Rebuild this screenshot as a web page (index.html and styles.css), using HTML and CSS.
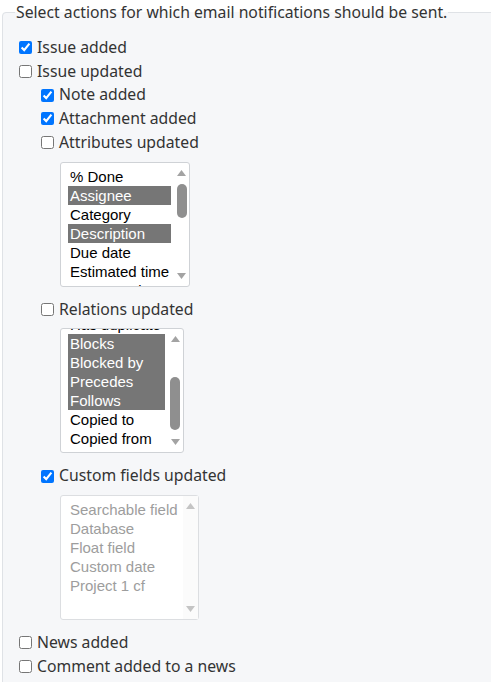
FILE: index.html
```html
<!DOCTYPE html>
<html>
<head>
<meta charset="utf-8">
<link rel="stylesheet" href="styles.css">
</head>
<body>
<fieldset class="box">
  <legend class="box-title">Select actions for which email notifications should be sent.</legend>
  <label class="row"><input type="checkbox" checked>Issue added</label>
  <label class="row"><input type="checkbox">Issue updated</label>
  <label class="row sub"><input type="checkbox" checked>Note added</label>
  <label class="row sub"><input type="checkbox" checked>Attachment added</label>
  <label class="row sub"><input type="checkbox">Attributes updated</label>
  <div class="list">
    <div class="list-view">
      <div class="opt">% Done</div>
      <div class="opt sel">Assignee</div>
      <div class="opt">Category</div>
      <div class="opt sel">Description</div>
      <div class="opt">Due date</div>
      <div class="opt">Estimated time</div>
      <div class="opt">Parent task</div>
      <div class="opt">Priority</div>
      <div class="opt">Private</div>
    </div>
    <div class="scrollbar">
      <svg class="arrow" viewBox="0 0 9 6" width="9" height="6"><path d="M4.5 0 L9 6 L0 6 Z"/></svg>
      <div class="track"><div class="thumb" style="margin-top:8px;height:34px"></div></div>
      <svg class="arrow" viewBox="0 0 9 6" width="9" height="6"><path d="M0 0 L9 0 L4.5 6 Z"/></svg>
    </div>
  </div>
  <label class="row sub"><input type="checkbox">Relations updated</label>
  <div class="list">
    <div class="list-view" id="relations">
      <div class="opt">Related to</div>
      <div class="opt">Is duplicate of</div>
      <div class="opt">Has duplicate</div>
      <div class="opt sel">Blocks</div>
      <div class="opt sel">Blocked by</div>
      <div class="opt sel">Precedes</div>
      <div class="opt sel">Follows</div>
      <div class="opt">Copied to</div>
      <div class="opt">Copied from</div>
    </div>
    <div class="scrollbar">
      <svg class="arrow" viewBox="0 0 9 6" width="9" height="6"><path d="M4.5 0 L9 6 L0 6 Z"/></svg>
      <div class="track"><div class="thumb" style="margin-top:35px;height:53px"></div></div>
      <svg class="arrow" viewBox="0 0 9 6" width="9" height="6"><path d="M0 0 L9 0 L4.5 6 Z"/></svg>
    </div>
  </div>
  <label class="row sub"><input type="checkbox" checked>Custom fields updated</label>
  <div class="list disabled">
    <div class="list-view">
      <div class="opt">Searchable field</div>
      <div class="opt">Database</div>
      <div class="opt">Float field</div>
      <div class="opt">Custom date</div>
      <div class="opt">Project 1 cf</div>
    </div>
    <div class="scrollbar">
      <svg class="arrow" viewBox="0 0 9 6" width="9" height="6"><path d="M4.5 0 L9 6 L0 6 Z"/></svg>
      <div class="track"></div>
      <svg class="arrow" viewBox="0 0 9 6" width="9" height="6"><path d="M0 0 L9 0 L4.5 6 Z"/></svg>
    </div>
  </div>
  <label class="row"><input type="checkbox">News added</label>
  <label class="row"><input type="checkbox">Comment added to a news</label>
</fieldset>
<script src="app.js"></script>
</body>
</html>
```
FILE: styles.css
```css
html, body {
  margin: 0;
  padding: 0;
  overflow: hidden;
  background: #ffffff;
}
body {
  font-family: "Noto Sans", "Open Sans", sans-serif;
  font-size: 15.75px;
  line-height: 23.75px;
  color: #333333;
}
.box {
  box-sizing: border-box;
  width: 620px;
  height: 720px;
  margin: 1px 0 0 2px;
  padding: 11px 12px 0 12px;
  border: 1px solid #dfe2e6;
  border-radius: 4px;
  background: #f6f7f9;
}
.box-title {
  padding: 0 1px;
}
.row {
  display: flex;
  align-items: center;
  height: 23.75px;
}
.row input {
  margin: 3px 5px 3px 4px;
  width: 13px;
  height: 13px;
}
.row.sub {
  margin-left: 22px;
}
.list {
  display: flex;
  width: fit-content;
  box-sizing: border-box;
  height: 125px;
  margin: 7px 0 11px 45px;
  border: 1px solid #cfd2d6;
  border-radius: 3px;
  background: #ffffff;
  color: #000000;
  font-family: "Liberation Sans", Arial, sans-serif;
  font-size: 15px;
  line-height: 19px;
}
.list-view {
  overflow: hidden;
  padding: 4px 3px 4px 7px;
}
.opt {
  height: 19px;
  padding: 0 2px;
  white-space: nowrap;
}
.opt.sel {
  background: #767676;
  color: #ffffff;
}
.scrollbar {
  width: 15px;
  display: flex;
  flex-direction: column;
  align-items: center;
  padding: 7px 0;
}
.arrow {
  display: block;
  fill: #a3a3a3;
  flex: none;
}
.track {
  flex: 1;
  display: flex;
  flex-direction: column;
  align-items: center;
}
.thumb {
  width: 10px;
  border-radius: 5px;
  background: #8f8f8f;
}
.list.disabled {
  color: #9d9d9d;
  border-color: #dcdee1;
}
.list.disabled .scrollbar {
  background: #fbfbfb;
}
.list.disabled .arrow {
  fill: #c4c4c4;
}
```
FILE: app.js
```js
document.getElementById('relations').scrollTop = 56;
```
